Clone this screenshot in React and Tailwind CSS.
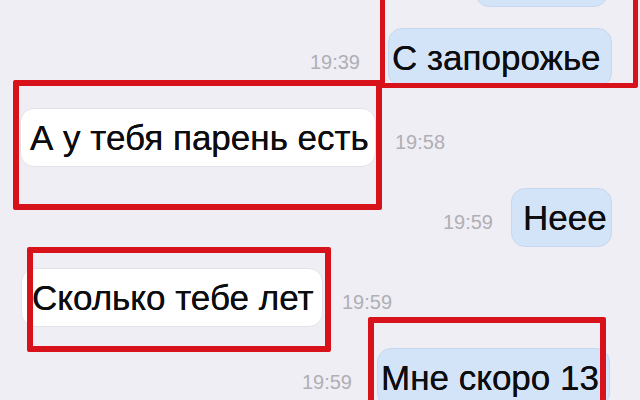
import React from 'react';

const messages = [
  { out: true, text: '', time: '', w: 'w-[133px]', pad: 'pl-[10px]', side: 'pr-[32px]', gap: '' },
  { out: true, text: 'С запорожье', time: '19:39', w: 'w-[224px]', pad: 'pl-[3px]', side: 'pr-[28px]', gap: 'mr-[28px]' },
  { out: false, text: 'А у тебя парень есть', time: '19:58', w: 'w-[356px]', pad: 'pl-[9px]', side: 'pl-[20px]', gap: 'ml-[19px]' },
  { out: true, text: 'Неее', time: '19:59', w: 'w-[101px]', pad: 'pl-[11px]', side: 'pr-[28px]', gap: 'mr-[18px]' },
  { out: false, text: 'Сколько тебе лет', time: '19:59', w: 'w-[302px]', pad: 'pl-[10px]', side: 'pl-[21px]', gap: 'ml-[19px]' },
  { out: true, text: 'Мне скоро 13', time: '19:59', w: 'w-[233px]', pad: 'pl-[3px]', side: 'pr-[30px]', gap: 'mr-[25px]' },
];

function Row({ msg }) {
  const bubble = msg.out
    ? 'bg-[#d3e4f9] border-[#c6d8ef]'
    : 'bg-white border-[#e2e2e8]';
  const time = (
    <span className={`mt-[8px] ${msg.gap} text-[20px] text-[#afafb4]`}>{msg.time}</span>
  );
  return (
    <div className={`flex items-center ${msg.out ? 'justify-end' : 'justify-start'} ${msg.side}`}>
      {msg.out && msg.time && time}
      <div className={`h-[59px] shrink-0 flex items-center overflow-hidden rounded-[14px] border ${bubble} ${msg.w} ${msg.pad}`}>
        <span className="text-[35px] leading-[38px] whitespace-nowrap text-[#0d0d0f] [text-shadow:0_0_0.5px_#0d0d0f]">{msg.text}</span>
      </div>
      {!msg.out && time}
    </div>
  );
}

export default function App() {
  return (
    <div className="relative w-[640px] h-[400px] overflow-hidden bg-[#efeef4]" style={{ fontFamily: '"Liberation Sans", Arial, sans-serif' }}>
      <div className="flex flex-col gap-[21px] -mt-[52px]">
        {messages.map((m, i) => (
          <Row key={i} msg={m} />
        ))}
      </div>

      {/* red annotation boxes drawn over the chat */}
      <div className="absolute left-[380px] top-[-8px] w-[258px] h-[96px] border-[5px] border-[#d8121b] rounded-[2px]" />
      <div className="absolute left-[13px] top-[80px] w-[369px] h-[130px] border-[6px] border-[#d8121b] rounded-[2px]" />
      <div className="absolute left-[27px] top-[247px] w-[304px] h-[105px] border-[6px] border-[#d8121b] rounded-[2px]" />
      <div className="absolute left-[368px] top-[317px] w-[238px] h-[100px] border-[6px] border-[#d8121b] rounded-[2px]" />
    </div>
  );
}
